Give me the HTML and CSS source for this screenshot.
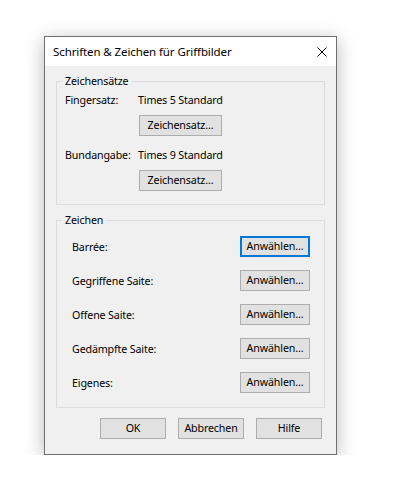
FILE: index.html
```html
<!DOCTYPE html>
<html>
<head>
    <title>Schriften &amp; Zeichen für Griffbilder</title>
    <link rel="stylesheet" href="styles.css">
</head>
<body>
    <div class="dialog">
        <div class="titlebar">
            <span class="title">Schriften &amp; Zeichen für Griffbilder</span>
            <svg class="close" width="10" height="10" viewBox="0 0 10 10">
                <path d="M0.5 0.5 L9.5 9.5 M9.5 0.5 L0.5 9.5" stroke="#000" stroke-width="1" fill="none"/>
            </svg>
        </div>

        <div class="content">
            <fieldset class="group fonts">
                <legend>Zeichensätze</legend>
                <div class="font-row">
                    <span class="font-label">Fingersatz:</span>
                    <span>Times 5 Standard</span>
                </div>
                <button class="btn font-btn">Zeichensatz...</button>
                <div class="font-row">
                    <span class="font-label">Bundangabe:</span>
                    <span>Times 9 Standard</span>
                </div>
                <button class="btn font-btn">Zeichensatz...</button>
            </fieldset>

            <fieldset class="group symbols">
                <legend>Zeichen</legend>
                <div class="symbol-row">
                    <span>Barrée:</span>
                    <button class="btn pick focused">Anwählen...</button>
                </div>
                <div class="symbol-row">
                    <span>Gegriffene Saite:</span>
                    <button class="btn pick">Anwählen...</button>
                </div>
                <div class="symbol-row">
                    <span>Offene Saite:</span>
                    <button class="btn pick">Anwählen...</button>
                </div>
                <div class="symbol-row">
                    <span>Gedämpfte Saite:</span>
                    <button class="btn pick">Anwählen...</button>
                </div>
                <div class="symbol-row">
                    <span>Eigenes:</span>
                    <button class="btn pick">Anwählen...</button>
                </div>
            </fieldset>

            <div class="actions">
                <button class="btn action">OK</button>
                <button class="btn action">Abbrechen</button>
                <button class="btn action">Hilfe</button>
            </div>
        </div>
    </div>
</body>
</html>
```

FILE: styles.css
```css
body {
    margin: 0;
    background: #fff;
    font-family: "Noto Sans", sans-serif;
    font-size: 10.7px;
    letter-spacing: -0.15px;
    color: #000;
}

.dialog {
    margin: 36px 0 0 44px;
    width: 291px;
    height: 417px;
    border: 1px solid #707070;
    background: #f0f0f0;
    box-shadow: 0 4px 18px rgba(0, 0, 0, 0.28);
    display: flex;
    flex-direction: column;
}

.titlebar {
    height: 29px;
    background: #fff;
    display: flex;
    align-items: center;
    justify-content: space-between;
    padding: 1px 9px 0 8px;
    box-sizing: border-box;
    flex-shrink: 0;
}

.title {
    font-size: 11.5px;
    letter-spacing: -0.1px;
    line-height: 16px;
}

.close {
    display: block;
}

.content {
    padding: 8px 11px 0 11px;
}

.group {
    margin: 0;
    border: 1px solid #dcdcdc;
    padding: 0 14px 0 8px;
}

.group legend {
    margin-left: -3px;
    padding: 0 3px;
    line-height: 14px;
}

.fonts {
    padding-top: 5px;
    padding-bottom: 13px;
}

.font-row {
    display: flex;
    line-height: 15px;
}

.font-label {
    width: 73px;
}

.font-btn {
    margin: 7px 0 12px 74px;
    width: 83px;
}

.font-btn:last-child {
    margin-bottom: 0;
}

.symbols {
    margin-top: 8px;
    padding-top: 9px;
    padding-bottom: 14px;
}

.symbol-row {
    display: flex;
    align-items: center;
    justify-content: space-between;
    padding-left: 7px;
    margin-bottom: 13px;
}

.symbol-row:last-child {
    margin-bottom: 0;
}

.btn {
    font-family: inherit;
    font-size: 10.7px;
    letter-spacing: -0.15px;
    color: #000;
    height: 21px;
    padding: 0;
    background: #e1e1e1;
    border: 1px solid #adadad;
    line-height: 19px;
    display: block;
}

.pick {
    width: 70px;
}

.focused {
    border: 2px solid #0078d7;
    line-height: 17px;
}

.actions {
    display: flex;
    justify-content: flex-end;
    gap: 12px;
    padding-right: 3px;
    margin-top: 10px;
}

.action {
    width: 66px;
}
```
